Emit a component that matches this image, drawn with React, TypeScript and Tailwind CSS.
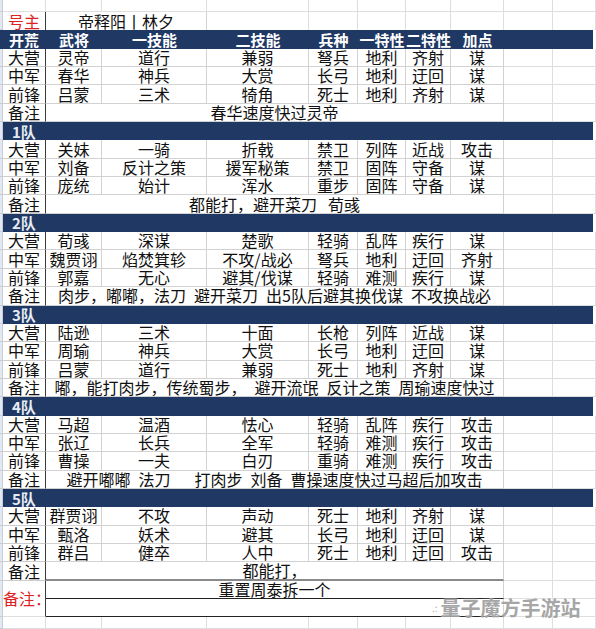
import React from "react";

const COLS = "grid grid-cols-[3px_43px_56px_105px_102px_49px_48px_45px_53px_49px_43px]";
const ROW_H = "h-[18.35px]";

type Group = {
  band?: string;
  rows: string[][];
  note: string;
};

const groups: Group[] = [
  {
    rows: [
      ["大营", "灵帝", "道行", "兼弱", "弩兵", "地利", "齐射", "谋"],
      ["中军", "春华", "神兵", "大赏", "长弓", "地利", "迂回", "谋"],
      ["前锋", "吕蒙", "三术", "犄角", "死士", "地利", "齐射", "谋"],
    ],
    note: "春华速度快过灵帝",
  },
  {
    band: "1队",
    rows: [
      ["大营", "关妹", "一骑", "折戟", "禁卫", "列阵", "近战", "攻击"],
      ["中军", "刘备", "反计之策", "援军秘策", "禁卫", "固阵", "守备", "谋"],
      ["前锋", "庞统", "始计", "浑水", "重步", "固阵", "守备", "谋"],
    ],
    note: "都能打，避开菜刀\u2002\u2009荀彧",
  },
  {
    band: "2队",
    rows: [
      ["大营", "荀彧", "深谋", "楚歌", "轻骑", "乱阵", "疾行", "谋"],
      ["中军", "魏贾诩", "焰焚箕轸", "不攻/战必", "弩兵", "地利", "迂回", "齐射"],
      ["前锋", "郭嘉", "无心", "避其/伐谋", "轻骑", "难测", "疾行", "谋"],
    ],
    note: "肉步，嘟嘟，法刀\u2002避开菜刀\u2002出5队后避其换伐谋\u2002不攻换战必",
  },
  {
    band: "3队",
    rows: [
      ["大营", "陆逊", "三术", "十面", "长枪", "列阵", "近战", "谋"],
      ["中军", "周瑜", "神兵", "大赏", "长弓", "地利", "迂回", "谋"],
      ["前锋", "吕蒙", "道行", "兼弱", "死士", "地利", "齐射", "谋"],
    ],
    note: "嘟，能打肉步，传统蜀步，\u2002避开流氓\u2002反计之策\u2002周瑜速度快过",
  },
  {
    band: "4队",
    rows: [
      ["大营", "马超", "温酒", "怯心", "轻骑", "乱阵", "疾行", "攻击"],
      ["中军", "张辽", "长兵", "全军", "轻骑", "难测", "疾行", "攻击"],
      ["前锋", "曹操", "一夫", "白刃", "重骑", "难测", "疾行", "攻击"],
    ],
    note: "避开嘟嘟\u2002法刀\u2003\u2002打肉步\u2002刘备\u2002曹操速度快过马超后加攻击",
  },
  {
    band: "5队",
    rows: [
      ["大营", "群贾诩", "不攻", "声动", "死士", "地利", "齐射", "谋"],
      ["中军", "甄洛", "妖术", "避其", "长弓", "地利", "迂回", "谋"],
      ["前锋", "群吕", "健卒", "人中", "死士", "地利", "迂回", "攻击"],
    ],
    note: "都能打，",
  },
];

const headers = ["武将", "一技能", "二技能", "兵种", "一特性", "二特性", "加点"];

function Strip() {
  return <div className="bg-[#e3e9f2] border-r border-b border-[#c9ced6]" />;
}

function Blank() {
  return <div className="border-r border-b border-[#dedede]" />;
}

function DataRow({ cells }: { cells: string[] }) {
  return (
    <div className={`${COLS} ${ROW_H}`}>
      <Strip />
      <div className="flex items-center justify-center border-r border-r-[#3c3c3c] border-b border-b-[#cdcdcd]">
        {cells[0]}
      </div>
      {cells.slice(1).map((c, i) => (
        <div
          key={i}
          className="flex items-center justify-center whitespace-nowrap border-r border-b border-[#d2d2d2]"
        >
          {c}
        </div>
      ))}
      <Blank />
      <Blank />
    </div>
  );
}

function NoteRow({ text, last }: { text: string; last?: boolean }) {
  return (
    <div className={`${COLS} ${ROW_H}`}>
      <Strip />
      <div className="flex items-center justify-center border-r border-r-[#3c3c3c] border-b border-b-[#cdcdcd]">
        备注
      </div>
      <div
        className={`col-span-7 flex items-center justify-center whitespace-nowrap border-r border-r-[#d2d2d2] ${
          last ? "border-b-2 border-b-[#8a8a8a]" : "border-b border-b-[#d2d2d2]"
        }`}
      >
        {text}
      </div>
      <Blank />
      <Blank />
    </div>
  );
}

function Band({ label }: { label: string }) {
  return (
    <div className={`${COLS} ${ROW_H}`}>
      <Strip />
      <div className="col-span-10 mr-[3px] flex items-center bg-[#1f3864] pl-[9px] text-[15px] font-bold text-[#e6ebf3]">
        {label}
      </div>
    </div>
  );
}

export default function App() {
  return (
    <div className="relative h-[629px] w-[596px] overflow-hidden bg-white font-['Noto_Sans_CJK_SC','Liberation_Sans',sans-serif] text-[16px] leading-[17px] text-[#101010]">
      {/* top partial row */}
      <div className={`${COLS} h-[12px]`}>
        <Strip />
        {Array.from({ length: 10 }).map((_, i) => (
          <Blank key={i} />
        ))}
      </div>

      {/* 号主 */}
      <div className={`${COLS} ${ROW_H}`}>
        <Strip />
        <div className="flex items-center justify-center border-r border-r-[#3c3c3c] text-[#dd2222]">号主</div>
        <div className="col-span-2 flex items-center justify-center border-r border-[#d2d2d2]">帝释阳丨林夕</div>
        {Array.from({ length: 7 }).map((_, i) => (
          <div key={i} className="border-r border-[#dedede]" />
        ))}
      </div>

      {/* header band */}
      <div className={`${COLS} ${ROW_H} w-[593px] bg-[#1f3864] text-[15px] font-bold text-white`}>
        <div className="col-span-2 flex items-center justify-center pl-[2px]">开荒</div>
        {headers.map((h) => (
          <div key={h} className="flex items-center justify-center whitespace-nowrap">
            {h}
          </div>
        ))}
        <div />
        <div />
      </div>

      {groups.map((g, gi) => (
        <React.Fragment key={gi}>
          {g.band && <Band label={g.band} />}
          {g.rows.map((r, ri) => (
            <DataRow key={ri} cells={r} />
          ))}
          <NoteRow text={g.note} last={gi === groups.length - 1} />
        </React.Fragment>
      ))}

      {/* final remarks */}
      <div className={`${COLS} grid-rows-[18.35px_18.35px]`}>
        <div className="row-span-2 bg-[#e3e9f2] border-r border-b border-[#c9ced6]" />
        <div className="row-span-2 flex items-center whitespace-nowrap border-r border-r-[#3c3c3c] border-b border-b-[#dedede] text-[#dd2222]">
          备注：
        </div>
        <div className="col-span-7 flex items-center justify-center border-r border-r-[#d2d2d2] border-b border-b-[#222]">
          重置周泰拆一个
        </div>
        <Blank />
        <Blank />
        <div className="col-span-7 border-r border-r-[#d2d2d2] border-b border-b-[#222]" />
        <Blank />
        <Blank />
      </div>

      {/* bottom partial row */}
      <div className={`${COLS} h-[12px]`}>
        <Strip />
        {Array.from({ length: 10 }).map((_, i) => (
          <Blank key={i} />
        ))}
      </div>

      {/* watermark */}
      <div className="absolute left-[432px] top-[598px] flex items-center gap-[3px] leading-[20px]">
        <span className="text-[10px] text-[#b0b0b0]">.:</span>
        <span className="text-[20px] font-bold text-[#a2a2a2] opacity-95 [text-shadow:0_0_3px_rgba(255,255,255,0.9)]">
          量子魔方手游站
        </span>
      </div>
    </div>
  );
}
